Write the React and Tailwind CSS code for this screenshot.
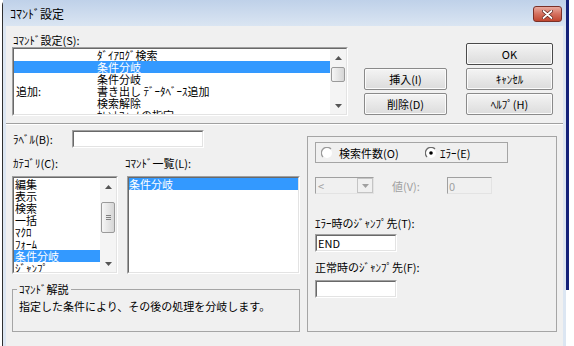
import React from 'react';

const jp = "font-['Noto_Sans_CJK_JP','Noto_Sans_CJK_SC',sans-serif]";

const Arrow = ({ dir = 'up', color = '#555' }) => (
  <svg width="7" height="4" viewBox="0 0 7 4">
    {dir === 'up' ? <path d="M0 4L3.5 0L7 4Z" fill={color} /> : <path d="M0 0L7 0L3.5 4Z" fill={color} />}
  </svg>
);

// sunken 3D frame (classic list / edit look)
const Sunken = ({ className = '', inner = 'bg-white', children }) => (
  <div className={`border border-t-[#a0a0a0] border-l-[#a0a0a0] border-r-white border-b-white ${className}`}>
    <div className={`h-full w-full flex border border-t-[#696969] border-l-[#696969] border-r-[#e3e3e3] border-b-[#e3e3e3] ${inner}`}>
      {children}
    </div>
  </div>
);

const Scrollbar = ({ gap, thumb, grip }) => (
  <div className="w-[16px] h-full shrink-0 flex flex-col bg-[#f4f4f4]">
    <div className="h-[17px] shrink-0 flex items-center justify-center"><Arrow dir="up" /></div>
    <div className={`${gap} shrink-0`} />
    <div className={`${thumb} shrink-0 mx-[1px] rounded-[2px] border border-[#9a9a9a] bg-gradient-to-r from-[#f6f6f6] to-[#d6d6d6] flex flex-col items-center justify-center gap-[1px]`}>
      {grip && (
        <>
          <div className="w-[5px] h-[1px] bg-[#808080]" />
          <div className="w-[5px] h-[1px] bg-[#808080]" />
          <div className="w-[5px] h-[1px] bg-[#808080]" />
        </>
      )}
    </div>
    <div className="flex-1" />
    <div className="h-[17px] shrink-0 flex items-center justify-center"><Arrow dir="down" /></div>
  </div>
);

const Button = ({ children, isDefault }) => (
  <div
    className={`h-[22px] flex items-center justify-center rounded-[2px] border bg-gradient-to-b from-[#f4f4f4] to-[#dcdcdc] shadow-[inset_0_0_0_1px_#fbfbfb] ${
      isDefault ? 'border-[#4a4a4a]' : 'border-[#8a8a8a]'
    }`}
  >
    {children}
  </div>
);

const Row = ({ selected, children, className = '' }) => (
  <div className={`h-[12px] shrink-0 flex items-center whitespace-nowrap ${selected ? 'bg-[#3399ff] text-white' : ''} ${className}`}>
    {children}
  </div>
);

const Radio = ({ checked }) => (
  <svg width="12" height="12" viewBox="0 0 12 12" className="shrink-0">
    <circle cx="6" cy="6" r="5" fill="#ffffff" />
    <path d="M10 2A5.6 5.6 0 0 0 2 10" fill="none" stroke={checked ? '#6a6a6a' : '#9a9a9a'} strokeWidth="1.3" />
    {checked && <circle cx="6" cy="6" r="1.8" fill="#000" />}
  </svg>
);

const CloseButton = () => (
  <div className="w-[29px] h-[16px] rounded-[3px] border border-[#7a3128] bg-gradient-to-b from-[#e9aa9f] via-[#d4705e] to-[#c0452f] flex items-center justify-center">
    <svg width="11" height="9" viewBox="0 0 11 9">
      <path d="M1.5 1L9.5 8M9.5 1L1.5 8" stroke="#5a2019" strokeWidth="3.2" strokeLinecap="round" />
      <path d="M1.5 1L9.5 8M9.5 1L1.5 8" stroke="#ffffff" strokeWidth="1.8" strokeLinecap="round" />
    </svg>
  </div>
);

export default function App() {
  return (
    <div className={`w-[574px] h-[346px] overflow-hidden flex bg-white text-[11px] leading-[12px] text-black ${jp}`}>
      <div className="w-[2px] shrink-0 bg-white" />

      <div className="w-[564px] shrink-0 flex flex-col border-l border-[#2f2f2f] bg-[#dce6f2] rounded-tl-[5px]">
        {/* title bar */}
        <div className="h-[26px] shrink-0 flex items-center justify-between pt-[2px] pl-[7px] pr-[4px] bg-gradient-to-b from-[#bfd1e9] to-[#dae5f2]">
          <span className="text-[12px]">ｺﾏﾝﾄﾞ設定</span>
          <CloseButton />
        </div>

        <div className="flex-1 mx-[3px] bg-[#f0f0f0] flex flex-col px-[6px]">
          {/* command settings */}
          <div className="flex items-start pt-[8px]">
            <div className="w-[336px] flex flex-col">
              <span className="pl-[1px] h-[12px]">ｺﾏﾝﾄﾞ設定(S):</span>
              <Sunken className="mt-[1px] h-[69px]">
                <div className="flex-1 flex flex-col overflow-hidden">
                  <Row className="pl-[2px]"><span className="w-[81px]" />ﾀﾞｲｱﾛｸﾞ検索</Row>
                  <Row selected className="pl-[2px]"><span className="w-[81px]" />条件分岐</Row>
                  <Row className="pl-[2px]"><span className="w-[81px]" />条件分岐</Row>
                  <Row className="pl-[2px]"><span className="w-[81px]">追加:</span>書き出し ﾃﾞｰﾀﾍﾞｰｽ追加</Row>
                  <Row className="pl-[2px]"><span className="w-[81px]" />検索解除</Row>
                  <Row className="pl-[2px]"><span className="w-[81px]" />ｶﾚﾝﾄﾌｫｰﾑの指定</Row>
                </div>
                <Scrollbar gap="h-[1px]" thumb="h-[15px]" />
              </Sunken>
            </div>

            <div className="ml-[16px] mt-[34px] w-[83px] flex flex-col gap-[3px]">
              <Button>挿入(I)</Button>
              <Button>削除(D)</Button>
            </div>

            <div className="ml-[19px] mt-[9px] w-[87px] flex flex-col gap-[3px]">
              <Button isDefault>OK</Button>
              <Button>ｷｬﾝｾﾙ</Button>
              <Button>ﾍﾙﾌﾟ(H)</Button>
            </div>
          </div>

          <div className="mt-[7px] -mx-[6px] border-t border-t-[#a0a0a0] border-b border-b-white" />

          <div className="flex items-start">
            {/* left column */}
            <div className="w-[288px] flex flex-col">
              <div className="mt-[5px] h-[18px] flex items-center">
                <span className="w-[60px] pl-[1px]">ﾗﾍﾞﾙ(B):</span>
                <Sunken className="w-[132px] h-[18px]" />
              </div>

              <div className="mt-[9px] h-[12px] flex">
                <span className="w-[113px] pl-[1px]">ｶﾃｺﾞﾘ(C):</span>
                <span>ｺﾏﾝﾄﾞ一覧(L):</span>
              </div>

              <div className="mt-[7px] h-[98px] flex gap-[9px]">
                <Sunken className="w-[106px] h-full">
                  <div className="flex-1 flex flex-col overflow-hidden">
                    <Row className="pl-[1px]">編集</Row>
                    <Row className="pl-[1px]">表示</Row>
                    <Row className="pl-[1px]">検索</Row>
                    <Row className="pl-[1px]">一括</Row>
                    <Row className="pl-[1px]">ﾏｸﾛ</Row>
                    <Row className="pl-[1px]">ﾌｫｰﾑ</Row>
                    <Row selected className="pl-[1px]">条件分岐</Row>
                    <Row className="pl-[1px]">ｼﾞｬﾝﾌﾟ</Row>
                  </div>
                  <Scrollbar gap="h-[7px]" thumb="h-[31px]" grip />
                </Sunken>
                <Sunken className="w-[173px] h-full">
                  <div className="flex-1 flex flex-col">
                    <Row selected>条件分岐</Row>
                  </div>
                </Sunken>
              </div>

              <fieldset className="mt-[9px] h-[49px] border border-[#a5a5a5] pl-[4px]">
                <legend className="px-[2px] leading-[12px]">ｺﾏﾝﾄﾞ解説</legend>
                <p className="mt-[5px] pl-[2px] text-[11px] whitespace-nowrap">指定した条件により、その後の処理を分岐します。</p>
              </fieldset>
            </div>

            {/* right group */}
            <div className="ml-[7px] mt-[11px] w-[250px] h-[196px] border border-[#a5a5a5] flex flex-col pl-[7px]">
              <div className="mt-[5px] w-[193px] h-[21px] border border-[#a5a5a5] flex items-center pl-[5px]">
                <div className="w-[104px] flex items-center gap-[6px]">
                  <Radio />
                  <span>検索件数(O)</span>
                </div>
                <div className="flex items-center gap-[3px]">
                  <Radio checked />
                  <span>ｴﾗｰ(E)</span>
                </div>
              </div>

              <div className="mt-[14px] h-[17px] flex items-center">
                <div className="w-[59px] h-[17px] border border-t-[#a0a0a0] border-l-[#a0a0a0] border-r-[#e3e3e3] border-b-[#e3e3e3] flex items-center justify-between">
                  <span className="pl-[2px] text-[#a0a0a0]">&lt;</span>
                  <div className="w-[16px] h-[15px] border border-[#c4c4c4] bg-[#f0f0f0] flex items-center justify-center">
                    <Arrow dir="down" color="#a0a0a0" />
                  </div>
                </div>
                <span className="ml-[18px] w-[55px] text-[#a0a0a0]">値(V):</span>
                <div className="w-[45px] h-[17px] border border-t-[#a0a0a0] border-l-[#a0a0a0] border-r-[#e3e3e3] border-b-[#e3e3e3] flex items-center">
                  <span className="pl-[1px] text-[#a0a0a0]">0</span>
                </div>
              </div>

              <span className="mt-[23px] h-[12px]">ｴﾗｰ時のｼﾞｬﾝﾌﾟ先(T):</span>
              <Sunken className="mt-[5px] w-[82px] h-[18px]">
                <span className="pl-[1px] self-center">END</span>
              </Sunken>

              <span className="mt-[9px] h-[12px]">正常時のｼﾞｬﾝﾌﾟ先(F):</span>
              <Sunken className="mt-[7px] w-[82px] h-[18px]" />
            </div>
          </div>
        </div>
      </div>

      <div className="w-[3px] shrink-0 flex flex-col">
        <div className="h-[290px] bg-[#14227a]" />
      </div>
      <div className="flex-1 bg-white" />
    </div>
  );
}
